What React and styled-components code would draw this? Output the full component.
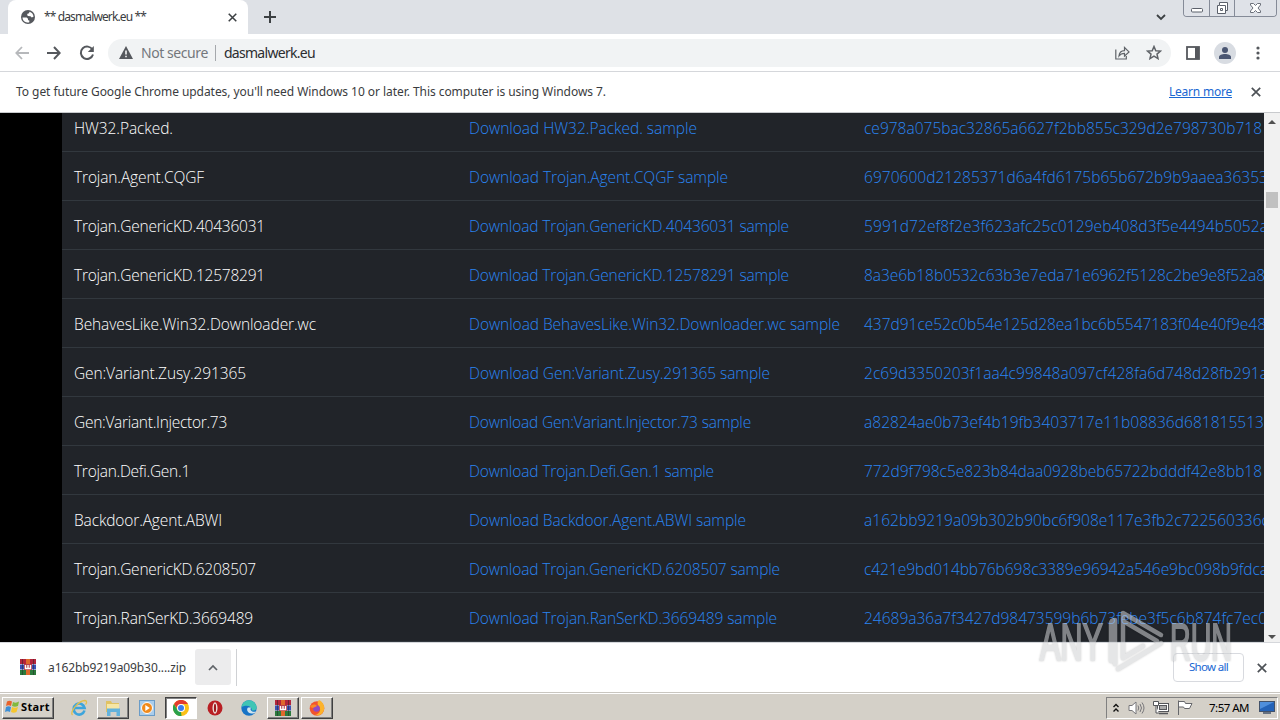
import React, {useLayoutEffect, useRef, useState} from 'react';
import styled, {createGlobalStyle, css} from 'styled-components';

const GlobalStyle = createGlobalStyle`
  * {
    box-sizing: border-box;
  }

  body {
    margin: 0;
    overflow: hidden;
    background: #fff;
  }
`

const samples = [
    {name: 'HW32.Packed.', w: 99, lw: 228, hash: 'ce978a075bac32865a6627f2bb855c329d2e798730b718', hw: 398},
    {name: 'Trojan.Agent.CQGF', w: 130, lw: 259, hash: '6970600d21285371d6a4fd6175b65b672b9b9aaea36353', hw: 404},
    {name: 'Trojan.GenericKD.40436031', w: 191, lw: 320, hash: '5991d72ef8f2e3f623afc25c0129eb408d3f5e4494b5052a', hw: 404},
    {name: 'Trojan.GenericKD.12578291', w: 191, lw: 320, hash: '8a3e6b18b0532c63b3e7eda71e6962f5128c2be9e8f52a8', hw: 401},
    {name: 'BehavesLike.Win32.Downloader.wc', w: 242, lw: 371, hash: '437d91ce52c0b54e125d28ea1bc6b5547183f04e40f9e48', hw: 402},
    {name: 'Gen:Variant.Zusy.291365', w: 172, lw: 301, hash: '2c69d3350203f1aa4c99848a097cf428fa6d748d28fb291a', hw: 404},
    {name: 'Gen:Variant.Injector.73', w: 153, lw: 282, hash: 'a82824ae0b73ef4b19fb3403717e11b08836d681815513', hw: 400},
    {name: 'Trojan.Defi.Gen.1', w: 116, lw: 245, hash: '772d9f798c5e823b84daa0928beb65722bdddf42e8bb18', hw: 398},
    {name: 'Backdoor.Agent.ABWI', w: 148, lw: 277, hash: 'a162bb9219a09b302b90bc6f908e117e3fb2c722560336c', hw: 405},
    {name: 'Trojan.GenericKD.6208507', w: 182, lw: 311, hash: 'c421e9bd014bb76b698c3389e96942a546e9bc098b9fdca', hw: 404},
    {name: 'Trojan.RanSerKD.3669489', w: 179, lw: 308, hash: '24689a36a7f3427d98473599b6b73febe3f5c6b874fc7ec0', hw: 403},
]

// spreads the letters so that the text fills the given width
const FitText = ({width, children}) => {
    const ref = useRef(null)
    const [spacing, setSpacing] = useState(0)
    useLayoutEffect(() => {
        const natural = ref.current.getBoundingClientRect().width
        setSpacing((width - natural) / String(children).length)
    }, [width, children])
    return <Fitted ref={ref} style={{letterSpacing: spacing}}>{children}</Fitted>
}

const App = () => (
    <Desktop>
        <GlobalStyle/>
        <TabStrip/>
        <Toolbar/>
        <InfoBar>
            <FitText width={590}>To get future Google Chrome updates, you'll need Windows 10 or later. This computer is using Windows 7.</FitText>
            <LearnMore><FitText width={63}>Learn more</FitText></LearnMore>
            <CloseIcon size={10}/>
        </InfoBar>
        <Content>
            <Sidebar/>
            <Table>
                {samples.map(item => (
                    <Row key={item.name}>
                        <Cell><FitText width={item.w}>{item.name}</FitText></Cell>
                        <Cell $link><FitText width={item.lw}>{`Download ${item.name} sample`}</FitText></Cell>
                        <Cell $link><FitText width={item.hw}>{item.hash}</FitText></Cell>
                    </Row>
                ))}
            </Table>
            <ScrollTrack>
                <svg width="16" height="16" viewBox="0 0 16 16"><path d="M4 11l4-4 4 4z" fill="#505050"/></svg>
                <ScrollThumb/>
                <svg width="16" height="10" viewBox="0 0 16 10"><path d="M4 3l4 4 4-4z" fill="#505050"/></svg>
            </ScrollTrack>
        </Content>
        <Downloads>
            <DownloadItem>
                <WinRar/>
                <FileName><FitText width={138}>a162bb9219a09b30....zip</FitText></FileName>
                <DownloadMenu>
                    <svg width="10" height="7" viewBox="0 0 10 7"><path d="M1 6l4-4 4 4" fill="none" stroke="#5f6368" strokeWidth="1.7"/></svg>
                </DownloadMenu>
            </DownloadItem>
            <ShowAll><FitText width={39}>Show all</FitText></ShowAll>
            <CloseIcon size={10}/>
        </Downloads>
        <Taskbar/>
        <Watermark/>
    </Desktop>
)

const CloseIcon = ({size, color = '#4d5156'}) => (
    <svg width={size} height={size} viewBox="0 0 10 10">
        <path d="M.8.8l8.4 8.4M9.2.8L.8 9.2" stroke={color} strokeWidth="1.7"/>
    </svg>
)

const TabStrip = () => (
    <Strip>
        <Tab>
            <svg width="14" height="14" viewBox="0 0 14 14">
                <circle cx="7" cy="7" r="7" fill="#55585d"/>
                <path d="M1.500 7.400h4.200l1.300 1.300v1.300l1.500.8-.4 1.800C4 12.800 1.600 10.500 1.500 7.400z" fill="#fff"/>
                <path d="M6.500 3.800L8 3.300l.5-1.600c2.300.7 3.900 2.600 4 5l-1.800.8-1.200-1.200-2.500-.2-.9-1.200z" fill="#fff"/>
            </svg>
            <TabTitle><FitText width={102}>** dasmalwerk.eu **</FitText></TabTitle>
            <CloseIcon size={9} color="#3c4043"/>
        </Tab>
        <NewTab>
            <svg width="12" height="12" viewBox="0 0 12 12"><path d="M6 0v12M0 6h12" stroke="#3c4043" strokeWidth="2"/></svg>
        </NewTab>
        <TabSearch>
            <svg width="10" height="7" viewBox="0 0 10 7"><path d="M1 1l4 4 4-4" fill="none" stroke="#3c4043" strokeWidth="1.8"/></svg>
        </TabSearch>
        <WindowButtons>
            <WindowButton $width={25}>
                <svg width="13" height="17" viewBox="0 0 13 17"><rect x="1.500" y="8.500" width="11" height="3.500" rx="1" fill="#fff" stroke="#5b606b"/></svg>
            </WindowButton>
            <WindowButton $width={25}>
                <svg width="14" height="17" viewBox="0 0 14 17">
                    <path d="M4.500 2.500h8v8h-2v3h-8v-8h2z" fill="#fff" stroke="#5b606b"/>
                    <path d="M5 5.500h5.500V11M5.500 8.500h2v2h-2z" fill="none" stroke="#5b606b"/>
                </svg>
            </WindowButton>
            <WindowButton $width={42}>
                <svg width="13" height="17" viewBox="0 0 13 17">
                    <path d="M1.500 3.500h3l2 2 2-2h3v1.500L9 8l2.500 3v1.500h-3l-2-2-2 2h-3V11L4 8 1.500 5z" fill="#fff" stroke="#6b707a"/>
                </svg>
            </WindowButton>
        </WindowButtons>
    </Strip>
)

const Toolbar = () => (
    <ToolbarRow>
        <NavIcons>
            <svg width="14" height="14" viewBox="0 0 14 14"><path d="M14 7H1.500M7 1L1.300 7 7 13" fill="none" stroke="#b6b8bb" strokeWidth="1.800"/></svg>
            <svg width="14" height="14" viewBox="0 0 14 14"><path d="M0 7h12.500M7 1l5.700 6L7 13" fill="none" stroke="#55585d" strokeWidth="2"/></svg>
            <svg width="16" height="16" viewBox="0 0 16 16">
                <path d="M13.500 4.800A6.200 6.200 0 1 0 14 9.500" fill="none" stroke="#55585d" strokeWidth="2"/>
                <path d="M14.800 1v6H8.800z" fill="#55585d"/>
            </svg>
        </NavIcons>
        <Omnibox>
            <svg width="14" height="13" viewBox="0 0 14 13">
                <path d="M7 0l7 13H0z" fill="#55585d"/>
                <path d="M7 4.500v4M7 9.700v1.600" stroke="#fff" strokeWidth="1.500"/>
            </svg>
            <Security><FitText width={67}>Not secure</FitText></Security>
            <Url><FitText width={91}>dasmalwerk.eu</FitText></Url>
            <OmniboxActions>
                <svg width="15" height="14" viewBox="0 0 15 14" fill="none" stroke="#5f6368" strokeWidth="1.200">
                    <path d="M.8 3.500V13h10.500v-3"/>
                    <path d="M4 10c.3-3.500 2.300-5.300 5.500-5.400V1.500L14 5.900l-4.500 4.300V7.300C7 7.300 5.300 8.200 4 10z"/>
                </svg>
                <svg width="16" height="15" viewBox="0 0 16 15">
                    <path d="M8 1.500l1.800 4.200 4.700.4-3.500 3 1 4.500L8 11.200l-4 2.400 1-4.500-3.500-3 4.700-.4z" fill="none" stroke="#5f6368" strokeWidth="1.500"/>
                </svg>
            </OmniboxActions>
        </Omnibox>
        <svg width="14" height="14" viewBox="0 0 14 14">
            <rect x="1" y="1" width="12" height="12" fill="none" stroke="#55585d" strokeWidth="1.800"/>
            <path d="M9 1h4v12H9z" fill="#55585d"/>
        </svg>
        <Avatar>
            <svg width="12" height="12" viewBox="0 0 12 12">
                <circle cx="6" cy="3" r="3" fill="#4a5672"/>
                <path d="M0 12v-2c0-2 3-3 6-3s6 1 6 3v2z" fill="#4a5672"/>
            </svg>
        </Avatar>
        <svg width="4" height="14" viewBox="0 0 4 14" fill="#55585d">
            <circle cx="2" cy="2" r="1.600"/>
            <circle cx="2" cy="7" r="1.600"/>
            <circle cx="2" cy="12" r="1.600"/>
        </svg>
    </ToolbarRow>
)

const WinRar = ({size = 16}) => (
    <svg width={size} height={size} viewBox="0 0 16 16">
        <path d="M0 0h16v5H0z" fill="#b3243c"/>
        <path d="M0 5.500h16v5H0z" fill="#3b50b5"/>
        <path d="M0 11h16v5H0z" fill="#2c7a3c"/>
        <path d="M2.500 0v16M13.500 0v16" stroke="#222" strokeOpacity=".45"/>
        <path d="M6 0h4v16H6z" fill="#e0692c"/>
        <path d="M4 5h8v6H4z" fill="#b8404a"/>
        <path d="M5.500 6v3.500h5V6M8 6v3" fill="none" stroke="#fff" strokeWidth="1.400"/>
    </svg>
)

const Taskbar = () => (
    <TaskbarRow>
        <StartButton>
            <svg width="15" height="15" viewBox="0 0 15 15">
                <path d="M2 2.500q2.500-1.500 5 0L6 7Q3.500 5.500 1 7z" fill="#e8622a"/>
                <path d="M8 3q3 1.500 6-.5L13 7q-3 1.500-6 0z" fill="#82b93c"/>
                <path d="M1 8q2.500-1.500 5 0l-1 5Q2.500 11.500 0 13z" fill="#3c8fd6"/>
                <path d="M7 8q3 1.500 6 0l-1.500 5q-3 1.500-5.500 0z" fill="#f6c62e"/>
            </svg>
            <FitText width={29}>Start</FitText>
        </StartButton>
        <Task>
            <svg width="18" height="18" viewBox="0 0 18 18">
                <path d="M14.500 11.500A5.500 5.500 0 1 1 14.600 9H5" fill="none" stroke="#3da5dc" strokeWidth="2.600"/>
                <path d="M2.500 16C-1 13 9 1.500 15 1.500c2.500.3 1.500 3 .5 4" fill="none" stroke="#e2bf4c" strokeWidth="1.300"/>
            </svg>
        </Task>
        <Task $raised>
            <svg width="16" height="16" viewBox="0 0 16 16">
                <path d="M1 1h5l1 2h7v9H1z" fill="#e0c263"/>
                <path d="M2 4h12v7H2z" fill="#f6e6a5"/>
                <path d="M2 8.500h13V16h-3.500v-4h-6v4H2z" fill="#63b2dc"/>
            </svg>
        </Task>
        <Task>
            <svg width="16" height="16" viewBox="0 0 16 16">
                <rect x=".5" y=".5" width="15" height="15" fill="#a9cdec" stroke="#6a9cc8"/>
                <circle cx="8" cy="8" r="5.500" fill="#f08a1c" stroke="#fff"/>
                <path d="M6.300 5v6l4.500-3z" fill="#fff"/>
            </svg>
        </Task>
        <Task $active>
            <svg width="16" height="16" viewBox="0 0 16 16">
                <circle cx="8" cy="8" r="8" fill="#fbc116"/>
                <path d="M1 4a8 8 0 0 1 14 0H8L5 9.500z" fill="#e33b2e"/>
                <path d="M1 4l3.700 6.200L8 12l.5 4A8 8 0 0 1 1 4z" fill="#2aa14b"/>
                <circle cx="8" cy="8" r="4" fill="#fff"/>
                <circle cx="8" cy="8" r="3" fill="#3b7ded"/>
            </svg>
        </Task>
        <Task>
            <svg width="16" height="16" viewBox="0 0 16 16">
                <circle cx="8" cy="8" r="7.500" fill="#b91f24"/>
                <ellipse cx="8" cy="8" rx="2.500" ry="5.700" fill="#efe4df"/>
                <ellipse cx="8" cy="8" rx="1.100" ry="4.300" fill="#9b181c"/>
            </svg>
        </Task>
        <Task>
            <svg width="16" height="16" viewBox="0 0 16 16">
                <circle cx="8" cy="8" r="7.700" fill="#1673c6"/>
                <path d="M.4 7A7.700 7.700 0 0 1 15.700 7c.2 3-2 4-5 3.500C11.500 7 7 4 .4 7z" fill="#40c5b5"/>
                <path d="M7 7.500c-2 2-.5 5.500 3.500 6 2 .2 3.500-.5 4.500-2-2 .5-4 .3-5-1-.8-1-.4-2 0-3z" fill="#cfe3ee"/>
            </svg>
        </Task>
        <Task $raised><WinRar/></Task>
        <Task $raised>
            <svg width="16" height="16" viewBox="0 0 16 16">
                <circle cx="8" cy="8.500" r="7.300" fill="#f2542d"/>
                <path d="M10 0c4 2 6 6 5 10-1.500 5-6 6-9 5 5-1 7-6 3-10-1-2 0-4 1-5z" fill="#fcb32a"/>
                <circle cx="7.500" cy="8.500" r="3.300" fill="#8f4ac4"/>
                <path d="M1 7c2-3 5-3 7-1-1 1-3 1-4 2z" fill="#f98a27"/>
            </svg>
        </Task>
        <Tray>
            <svg width="8" height="12" viewBox="0 0 8 12"><path d="M1.500 5L4 2.500 6.500 5M1.500 9.500L4 7l2.500 2.500" fill="none" stroke="#111" strokeWidth="1.400"/></svg>
            <svg width="17" height="14" viewBox="0 0 17 14" fill="none" stroke="#77767a">
                <path d="M1 4.500h3L8 1v12L4 9.500H1z" fill="#fff"/>
                <path d="M10 4.500q1.500 2.500 0 5M12 3q3 4 0 8M14 1.500q4 5.500 0 11"/>
            </svg>
            <svg width="16" height="15" viewBox="0 0 16 15" stroke="#55565a">
                <rect x="4.500" y="3.500" width="11" height="8" fill="#fff"/>
                <rect x="6.500" y="5.500" width="7" height="4" fill="#aaa"/>
                <path d="M6 13.500h9" strokeWidth="1.500"/>
                <path d="M.5 1.500h5v4h-5zM3 5.500V13h3" fill="#fff"/>
            </svg>
            <svg width="16" height="15" viewBox="0 0 16 15"><path d="M1.500 15V.5M1.500 1.500h6l1 2h6.500l-2.500 5h-5l-1-1.500h-5" fill="#fff" stroke="#66676b"/></svg>
            <Clock><FitText width={40}>7:57 AM</FitText></Clock>
            <svg width="16" height="13" viewBox="0 0 16 13">
                <rect x=".5" y=".5" width="15" height="10" fill="#2463b8" stroke="#42526a"/>
                <path d="M1 1h14L1 8z" fill="#4f8fdc"/>
                <path d="M4 12h8" stroke="#42526a" strokeWidth="1.500"/>
            </svg>
        </Tray>
    </TaskbarRow>
)

const Watermark = () => (
    <WatermarkBox>
        <svg width="204" height="70" viewBox="0 0 204 70">
            <g fontFamily="'Liberation Sans Narrow', 'Liberation Sans'" fontSize="51" fill="#d0d2d4" stroke="#d0d2d4" strokeWidth="2">
                <text x="4" y="53" textLength="63" lengthAdjust="spacingAndGlyphs">ANY</text>
                <text x="134" y="53" textLength="62" lengthAdjust="spacingAndGlyphs">RUN</text>
            </g>
            <g fill="none" stroke="#d0d2d4" strokeWidth="4.500" strokeLinecap="round" strokeLinejoin="round">
                <path d="M75 54V17q0-4 4-4v44"/>
                <path d="M87 50V6l38 22M87 14l34 20"/>
                <path d="M82 62l43-26M87 51l20-12"/>
            </g>
        </svg>
    </WatermarkBox>
)

export default App;

const uiFont = "'Noto Sans', 'Open Sans', sans-serif"

const Desktop = styled.div`
  position: relative;
  display: flex;
  flex-direction: column;
  width: 1280px;
  height: 720px;
  overflow: hidden;
  background: #fff;
  font-family: ${uiFont};
  font-size: 12px;
  color: #3a3c40;

  svg {
    display: block;
    flex-shrink: 0;
  }
`

const Fitted = styled.span`
  display: inline-block;
  white-space: pre;
`

const Strip = styled.div`
  display: flex;
  flex: 0 0 34px;
  background: #dee1e6;
`

const Tab = styled.div`
  display: flex;
  align-items: center;
  width: 240px;
  margin-left: 8px;
  padding: 0 11px 0 13px;
  border-radius: 8px 8px 0 0;
  background: #fff;
`

const TabTitle = styled.div`
  flex: 1;
  margin-left: 9px;
  line-height: 16px;
`

const NewTab = styled.div`
  padding: 11px 16px;
`

const TabSearch = styled.div`
  margin-left: auto;
  padding: 14px 17px 0 0;
`

const WindowButtons = styled.div`
  display: flex;
  height: 17px;
  margin-right: 3px;
  border: 1px solid #858b98;
  border-top: 0;
  border-radius: 0 0 4px 4px;
  overflow: hidden;
`

const WindowButton = styled.div`
  display: flex;
  justify-content: center;
  width: ${({$width}) => $width}px;
  background: #dfe2e8;

  & + & {
    border-left: 1px solid #858b98;
  }
`

const ToolbarRow = styled.div`
  display: flex;
  align-items: center;
  flex: 0 0 38px;
  padding: 0 20px 0 15px;
  border-bottom: 1px solid #d5d7db;
`

const NavIcons = styled.div`
  display: flex;
  align-items: center;
  gap: 18px;
  width: 93px;
`

const Omnibox = styled.div`
  display: flex;
  align-items: center;
  width: 1064px;
  height: 28px;
  margin-right: 15px;
  padding: 0 9px 0 11px;
  border-radius: 14px;
  background: #f1f3f4;
  font-size: 14px;
  line-height: 18px;
`

const Security = styled.div`
  margin-left: 8px;
  padding-right: 7px;
  border-right: 1px solid #a5a8ac;
  line-height: 16px;
  color: #74777c;
`

const Url = styled.div`
  margin-left: 8px;
  color: #2c2d30;
`

const OmniboxActions = styled.div`
  display: flex;
  align-items: center;
  gap: 16px;
  margin-left: auto;
`

const Avatar = styled.div`
  display: flex;
  align-items: center;
  justify-content: center;
  width: 22px;
  height: 22px;
  margin: 0 20px 0 14px;
  border-radius: 50%;
  background: #d8dce2;
`

const InfoBar = styled.div`
  display: flex;
  align-items: center;
  flex: 0 0 41px;
  padding: 0 19px 0 16px;
  border-bottom: 1px solid #c8cacd;

  > span,
  > div {
    padding-bottom: 2px;
  }
`

const LearnMore = styled.div`
  margin: 0 19px 0 auto;
  color: #1a67d2;

  span {
    text-decoration: underline;
  }
`

const Content = styled.div`
  display: flex;
  flex: 0 0 529px;
  overflow: hidden;
  background: #212429;
`

const Sidebar = styled.div`
  flex: 0 0 62px;
  background: #000;
`

const Table = styled.div`
  width: 1202px;
  margin-top: -10px;
  overflow: hidden;
`

const Row = styled.div`
  display: grid;
  grid-template-columns: 395px 395px 412px;
  height: 49px;
  border-bottom: 1px solid #32383e;
`

const Cell = styled.div`
  padding: 13px 0 11px 12px;
  overflow: hidden;
  font-family: 'Open Sans', sans-serif;
  font-size: 15.500px;
  font-weight: 300;
  line-height: 24px;
  white-space: nowrap;
  color: ${({$link}) => $link ? '#2a84f2' : '#fff'};
`

const ScrollTrack = styled.div`
  display: flex;
  flex-direction: column;
  width: 16px;
  background: #f1f1f1;

  svg:last-child {
    margin-top: auto;
  }
`

const ScrollThumb = styled.div`
  width: 12px;
  height: 16px;
  margin: 63px 2px 0;
  background: #c1c1c1;
`

const Downloads = styled.div`
  display: flex;
  align-items: center;
  flex: 0 0 50px;
  padding: 0 13px 0 20px;
  border-top: 1px solid #d5d7db;
`

const DownloadItem = styled.div`
  display: flex;
  align-items: center;
  height: 37px;
  margin: 0 auto 1px 0;
  padding-right: 5px;
  border-right: 1px solid #cfd1d4;
`

const FileName = styled.div`
  margin-left: 12px;
`

const DownloadMenu = styled.div`
  display: flex;
  align-items: center;
  justify-content: center;
  width: 36px;
  height: 36px;
  margin-left: 9px;
  border-radius: 3px;
  background: #ececed;
`

const ShowAll = styled.div`
  display: flex;
  align-items: center;
  justify-content: center;
  width: 71px;
  height: 29px;
  margin-right: 13px;
  padding-bottom: 3px;
  border: 1px solid #d8dadf;
  border-radius: 4px;
  font-size: 11.500px;
  color: #1a67d2;
`

const raised = css`
  border: 1px solid;
  border-color: #fff #404040 #404040 #fff;
  box-shadow: inset -1px -1px #808080;
`

const sunken = css`
  border: 1px solid;
  border-color: #404040 #fff #fff #404040;
  box-shadow: inset 1px 1px #808080;
  background: #fff;
`

const TaskbarRow = styled.div`
  display: flex;
  align-items: center;
  flex: 0 0 28px;
  padding: 2px 2px 0;
  border-top: 1px solid #c9c6c0;
  background: #d4d0c8;
  box-shadow: inset 0 1px #fff;
`

const StartButton = styled.div`
  ${raised};
  display: flex;
  align-items: center;
  gap: 1px;
  width: 52px;
  height: 22px;
  margin-right: 9px;
  padding: 0 0 2px 2px;
  font-size: 11px;
  font-weight: 700;
  color: #000;
`

const Task = styled.div`
  display: flex;
  align-items: center;
  justify-content: center;
  width: 32px;
  height: 22px;
  margin-right: 2px;
  ${({$raised}) => $raised && raised};
  ${({$active}) => $active && sunken};
`

const Tray = styled.div`
  display: flex;
  align-items: center;
  gap: 8px;
  width: 172px;
  height: 22px;
  margin-left: auto;
  padding-left: 5px;
  border: 1px solid;
  border-color: #808080 #fff #fff #808080;
`

const Clock = styled.div`
  margin: 0 2px 1px 8px;
  font-size: 11.500px;
  color: #000;
`

const WatermarkBox = styled.div`
  position: absolute;
  left: 1036px;
  top: 607px;
  opacity: .55;
  filter: drop-shadow(0 0 1px rgba(0, 0, 0, .35));
`
